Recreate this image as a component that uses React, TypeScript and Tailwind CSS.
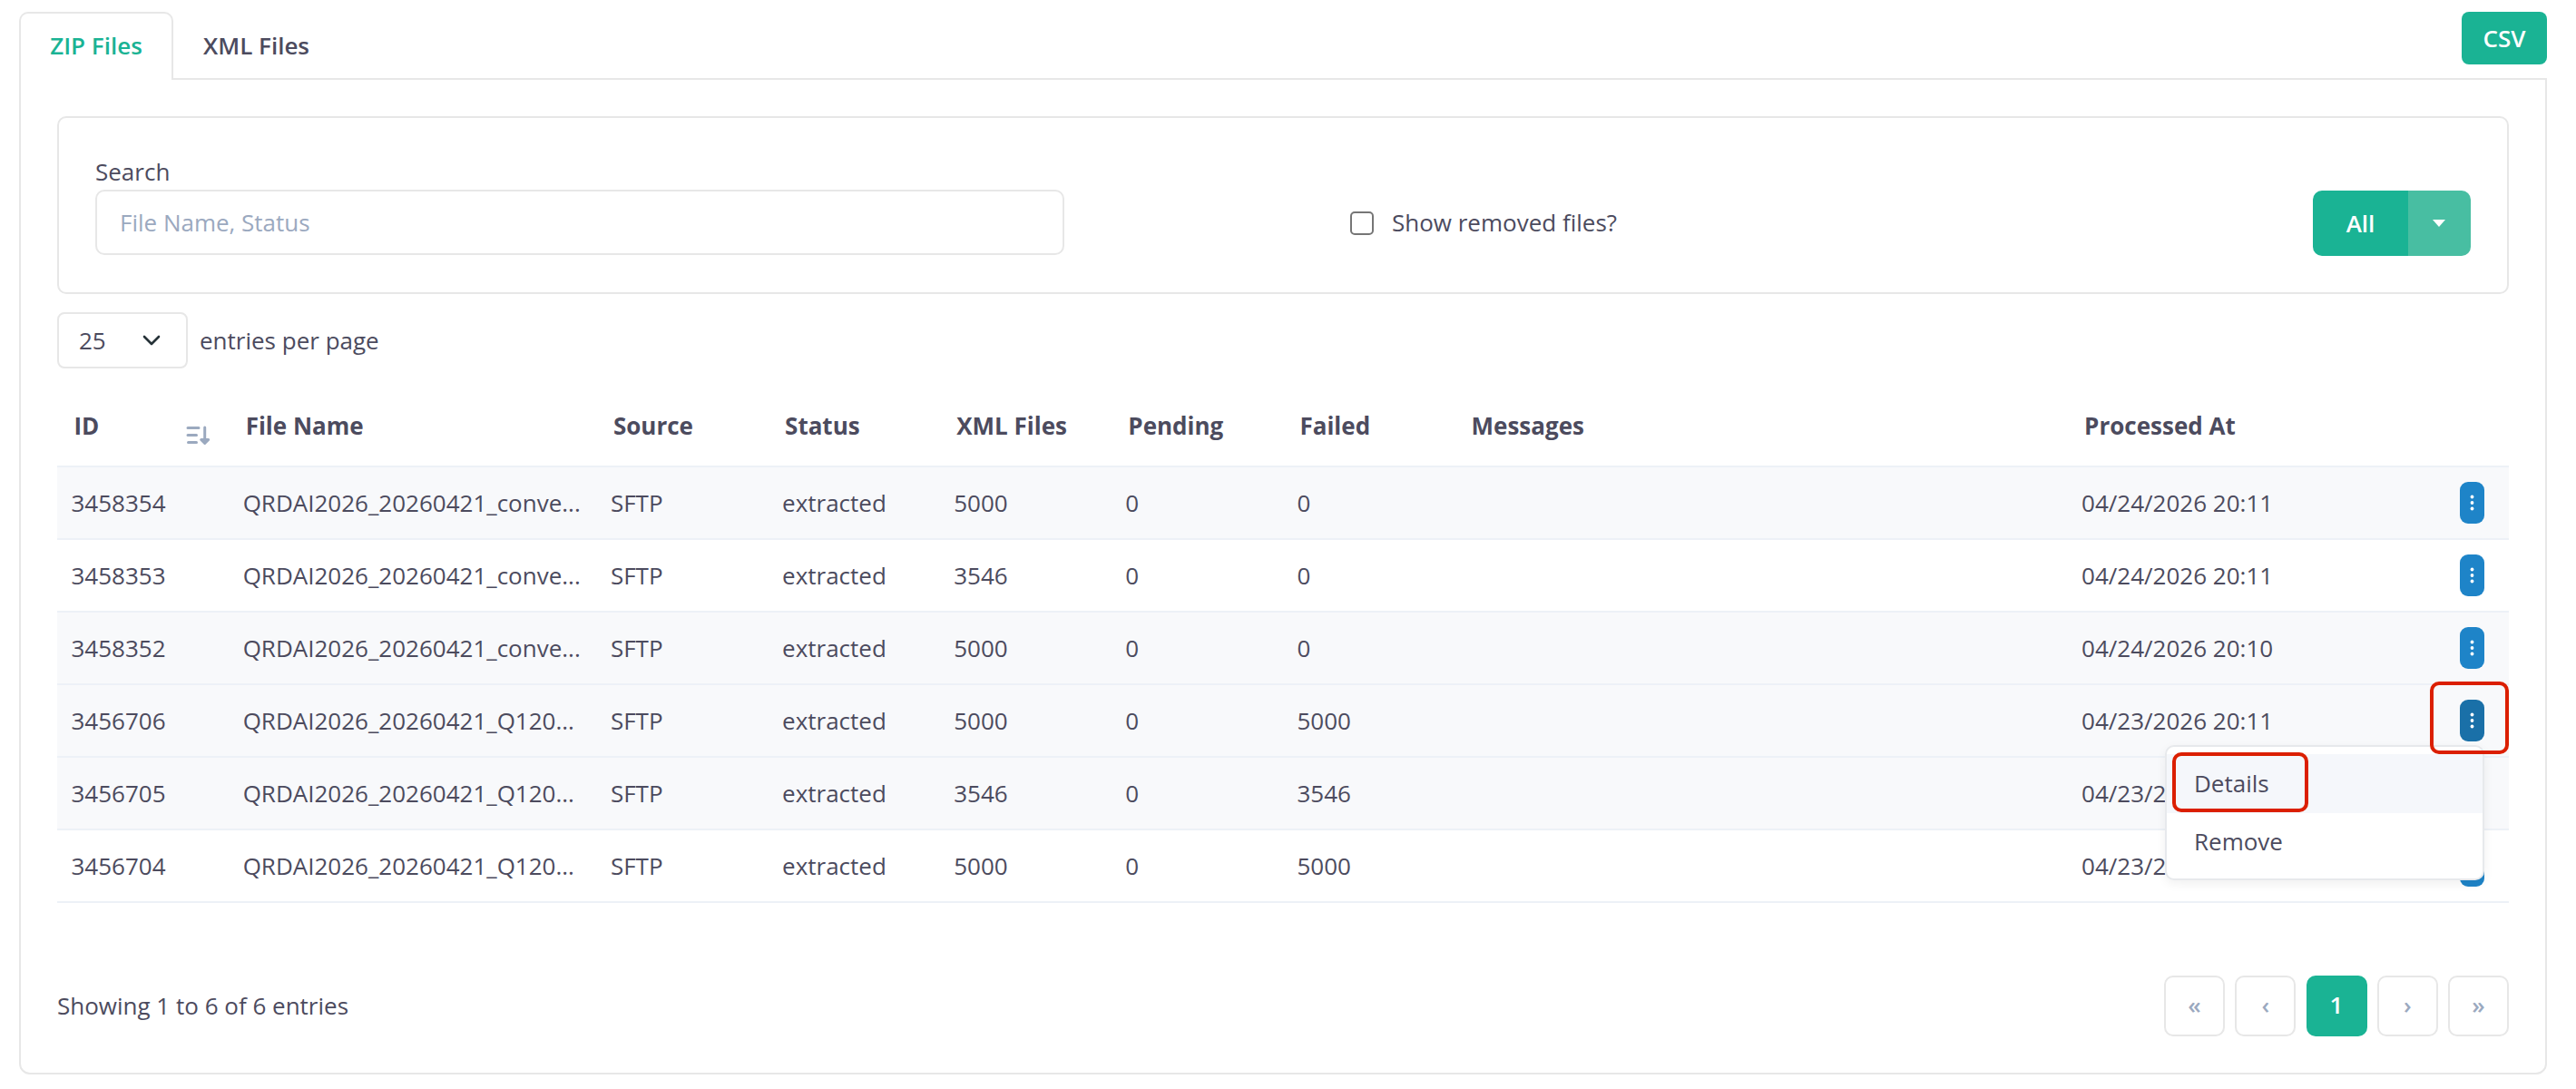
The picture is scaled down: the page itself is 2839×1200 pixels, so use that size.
import { useState } from 'react';

type FileRow = {
  id: number;
  fileName: string;
  source: string;
  status: string;
  xmlFiles: number;
  pending: number;
  failed: number;
  messages: string;
  processedAt: string;
};

const rows: FileRow[] = [
  { id: 3458354, fileName: 'QRDAI2026_20260421_conve...', source: 'SFTP', status: 'extracted', xmlFiles: 5000, pending: 0, failed: 0, messages: '', processedAt: '04/24/2026 20:11' },
  { id: 3458353, fileName: 'QRDAI2026_20260421_conve...', source: 'SFTP', status: 'extracted', xmlFiles: 3546, pending: 0, failed: 0, messages: '', processedAt: '04/24/2026 20:11' },
  { id: 3458352, fileName: 'QRDAI2026_20260421_conve...', source: 'SFTP', status: 'extracted', xmlFiles: 5000, pending: 0, failed: 0, messages: '', processedAt: '04/24/2026 20:10' },
  { id: 3456706, fileName: 'QRDAI2026_20260421_Q120...', source: 'SFTP', status: 'extracted', xmlFiles: 5000, pending: 0, failed: 5000, messages: '', processedAt: '04/23/2026 20:11' },
  { id: 3456705, fileName: 'QRDAI2026_20260421_Q120...', source: 'SFTP', status: 'extracted', xmlFiles: 3546, pending: 0, failed: 3546, messages: '', processedAt: '04/23/2026 20:11' },
  { id: 3456704, fileName: 'QRDAI2026_20260421_Q120...', source: 'SFTP', status: 'extracted', xmlFiles: 5000, pending: 0, failed: 5000, messages: '', processedAt: '04/23/2026 20:11' },
];

const columns = [
  { label: 'ID', width: 'w-[7%]' },
  { label: 'File Name', width: 'w-[15%]' },
  { label: 'Source', width: 'w-[7%]' },
  { label: 'Status', width: 'w-[7%]' },
  { label: 'XML Files', width: 'w-[7%]' },
  { label: 'Pending', width: 'w-[7%]' },
  { label: 'Failed', width: 'w-[7%]' },
  { label: 'Messages', width: 'w-[25%]' },
  { label: 'Processed At', width: 'w-[14%]' },
  { label: '', width: 'w-[4%]' },
];

function SortIcon() {
  return (
    <svg className="mt-[17px] h-[26px] w-[28px]" viewBox="0 0 28 26" fill="none" stroke="#9ba9bf" strokeWidth="3" strokeLinecap="round" strokeLinejoin="round">
      <path d="M3 4.5h12M3 12.5h9.5M3.5 20.5h9M21.7 4v17M17.7 17.5h8l-4 4z" />
    </svg>
  );
}

function ActionMenu() {
  return (
    <div className="absolute top-[50px] right-0 z-10 w-[352px] rounded-[10px] border-2 border-[#e7e9ec] bg-white py-2 text-left shadow-[0_4px_12px_rgba(0,0,0,0.06)]">
      <button className="block h-[65px] w-full bg-[#f5f7fb] pl-[30px] text-left">Details</button>
      <button className="block h-[64px] w-full pb-[2px] pl-[30px] text-left">Remove</button>
      <span className="pointer-events-none absolute top-[6px] left-[6px] h-[66px] w-[150px] rounded-[10px] border-4 border-[#db1f00]" />
    </div>
  );
}

function ActionButton({ open, onClick }: { open: boolean; onClick: () => void }) {
  return (
    <div className="relative h-[46px] w-[27px]">
      <button
        onClick={onClick}
        className={`flex h-[46px] w-[27px] items-center justify-center rounded-[9px] ${
          open ? 'bg-[#1a70a8]' : 'bg-[#1e84c8]'
        }`}
      >
        <svg className="h-[18px] w-[5px]" viewBox="0 0 5 18" fill="#fff">
          <circle cx="2.5" cy="2.5" r="1.9" />
          <circle cx="2.5" cy="9" r="1.9" />
          <circle cx="2.5" cy="15.5" r="1.9" />
        </svg>
      </button>
      {open && <ActionMenu />}
      {open && (
        <span className="pointer-events-none absolute -top-[20px] -left-[33px] z-20 h-[80px] w-[87px] rounded-[10px] border-4 border-[#db1f00]" />
      )}
    </div>
  );
}

function PageButton({ label, active = false }: { label: string; active?: boolean }) {
  return (
    <button
      className={`size-[67px] rounded-[10px] pb-[2px] font-semibold ${
        active ? 'bg-[#1ab394] text-white' : 'border-2 border-[#e7e7e7] text-[#9ba9bf]'
      }`}
    >
      {label}
    </button>
  );
}

export default function App() {
  const [search, setSearch] = useState('');
  const [showRemoved, setShowRemoved] = useState(false);
  const [openId, setOpenId] = useState<number | null>(3456706);

  return (
    <div className="h-[1200px] w-[2839px] bg-white pt-[13px] pr-[32px] pl-[21px] font-['Open_Sans',sans-serif] text-[26px] leading-[39px] text-[#4c4b5e]">
      {/* Tabs */}
      <div className="flex items-start justify-between">
        <div className="flex font-semibold">
          <button className="relative z-10 -mb-[2px] h-[75px] w-[170px] rounded-t-[10px] border-2 border-b-0 border-[#e7e7e7] bg-white pb-[2px] text-[#1ab394]">
            ZIP Files
          </button>
          <button className="h-[73px] pt-[1px] pl-[33px]">XML Files</button>
        </div>
        <button className="h-[58px] w-[94px] rounded-[8px] bg-[#1ab394] font-semibold text-white">CSV</button>
      </div>

      <div className="h-[1098px] rounded-b-[12px] border-2 border-[#e7e7e7] px-[40px] pt-[40px]">
        {/* Filters */}
        <div className="flex h-[196px] items-start rounded-[10px] border-2 border-[#e7e7e7] px-[40px] pt-[40px]">
          <label className="block w-[1068px]">
            <span className="block h-[39px]">Search</span>
            <input
              value={search}
              onChange={(e) => setSearch(e.target.value)}
              placeholder="File Name, Status"
              className="block h-[72px] w-full rounded-[10px] border-2 border-[#e7e7e7] px-[25px] placeholder:text-[#9ba9bf]"
            />
          </label>
          <label className="mt-[40px] ml-[315px] flex h-[72px] items-center">
            <input
              type="checkbox"
              checked={showRemoved}
              onChange={(e) => setShowRemoved(e.target.checked)}
              className="size-[26px] appearance-none rounded-[5px] border-2 border-[#767676]"
            />
            <span className="ml-[20px] pb-[1px]">Show removed files?</span>
          </label>
          <div className="mt-[40px] ml-auto flex h-[72px] overflow-hidden rounded-[10px] font-semibold text-white">
            <button className="w-[105px] bg-[#1ab394]">All</button>
            <button className="flex w-[69px] items-center justify-center bg-[#48bea2] pr-[2px]">
              <svg className="h-[8px] w-[14px]" viewBox="0 0 14 8" fill="#fff">
                <path d="M0 0h14L7 8z" />
              </svg>
            </button>
          </div>
        </div>

        {/* Page size */}
        <div className="mt-[20px] flex h-[62px] items-center">
          <button className="flex h-[62px] w-[144px] items-center rounded-[8px] border-2 border-[#e7e7e7] pl-[22px]">
            25
            <svg className="ml-[40px] h-[12px] w-[20px]" viewBox="0 0 20 12" fill="none" stroke="#263238" strokeWidth="2.6" strokeLinecap="round" strokeLinejoin="round">
              <path d="M2 2l8 8 8-8" />
            </svg>
          </button>
          <span className="ml-[13px]">entries per page</span>
        </div>

        <table className="mt-[19px] w-full table-fixed border-separate border-spacing-0">
          <thead>
            <tr className="h-[90px] text-left">
              {columns.map((col) => (
                <th key={col.label} className={`${col.width} border-b-2 border-[#edf1f7] pr-[20px] pl-[18.5px] font-bold`}>
                  {col.label === 'ID' ? (
                    <div className="flex h-[39px] justify-between">
                      ID
                      <SortIcon />
                    </div>
                  ) : (
                    col.label
                  )}
                </th>
              ))}
            </tr>
          </thead>
          <tbody>
            {rows.map((row, i) => (
              <tr
                key={row.id}
                className={`h-[80px] [&>td]:border-b-2 [&>td]:border-[#edf1f7] ${
                  i % 2 === 0 || row.id === openId ? 'bg-[#f8f9fb]' : ''
                }`}
              >
                <td className="px-[15.5px]">{row.id}</td>
                <td className="px-[15.5px] whitespace-nowrap">{row.fileName}</td>
                <td className="px-[15.5px]">{row.source}</td>
                <td className="px-[15.5px]">{row.status}</td>
                <td className="px-[15.5px]">{row.xmlFiles}</td>
                <td className="px-[15.5px]">{row.pending}</td>
                <td className="px-[15.5px]">{row.failed}</td>
                <td className="px-[15.5px]">{row.messages}</td>
                <td className="px-[15.5px] whitespace-nowrap">{row.processedAt}</td>
                <td className="pr-[27px]">
                  <div className="flex justify-end">
                    <ActionButton
                      open={row.id === openId}
                      onClick={() => setOpenId(row.id === openId ? null : row.id)}
                    />
                  </div>
                </td>
              </tr>
            ))}
          </tbody>
        </table>

        {/* Footer */}
        <div className="mt-[80px] flex h-[67px] items-center justify-between">
          <span>Showing 1 to 6 of 6 entries</span>
          <div className="flex gap-[11.25px]">
            <PageButton label="«" />
            <PageButton label="‹" />
            <PageButton label="1" active />
            <PageButton label="›" />
            <PageButton label="»" />
          </div>
        </div>
      </div>
    </div>
  );
}
